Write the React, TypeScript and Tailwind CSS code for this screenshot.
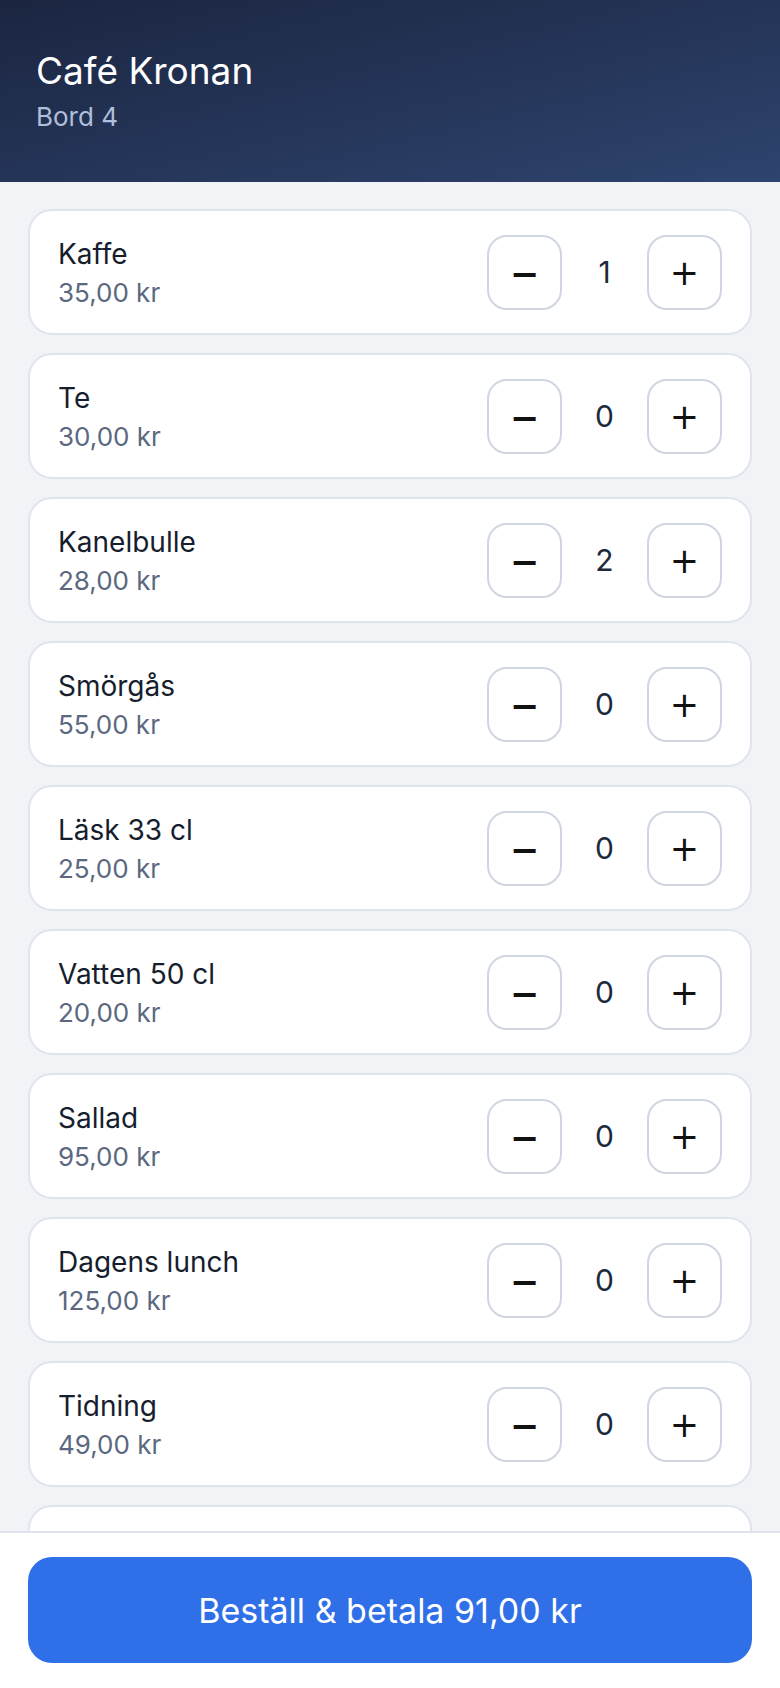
type Item = { name: string; price: number; qty: number };

const items: Item[] = [
  { name: "Kaffe", price: 35, qty: 1 },
  { name: "Te", price: 30, qty: 0 },
  { name: "Kanelbulle", price: 28, qty: 2 },
  { name: "Smörgås", price: 55, qty: 0 },
  { name: "Läsk 33 cl", price: 25, qty: 0 },
  { name: "Vatten 50 cl", price: 20, qty: 0 },
  { name: "Sallad", price: 95, qty: 0 },
  { name: "Dagens lunch", price: 125, qty: 0 },
  { name: "Tidning", price: 49, qty: 0 },
  { name: "Chokladboll", price: 22, qty: 0 },
];

const kr = (n: number) => n.toFixed(2).replace(".", ",") + " kr";

function ItemRow({ item }: { item: Item }) {
  return (
    <div className="flex h-[126px] shrink-0 items-center justify-between rounded-[24px] border-2 border-[#dfe4ee] bg-white px-7">
      <div className="flex flex-col">
        <p className="text-[28px] leading-[34px] text-[#161e2e]">{item.name}</p>
        <p className="mt-1.5 text-[26px] leading-[31px] text-[#5b6880]">{kr(item.price)}</p>
      </div>
      <div className="flex items-center gap-4">
        <button className="flex h-[75px] w-[75px] items-center justify-center rounded-[20px] border-2 border-[#cfd6e2] bg-white pt-1 font-['DejaVu_Sans',sans-serif] text-[35px] font-bold leading-none text-[#111]">
          −
        </button>
        <span className="w-[53px] text-center text-[30px] leading-none text-[#1e293b]">{item.qty}</span>
        <button className="flex h-[75px] w-[75px] items-center justify-center rounded-[20px] border-2 border-[#cfd6e2] bg-white pt-0.5 font-['DejaVu_Sans',sans-serif] text-[35px] leading-none text-[#111]">
          +
        </button>
      </div>
    </div>
  );
}

export default function App() {
  const total = items.reduce((sum, i) => sum + i.price * i.qty, 0);

  return (
    <div className="flex h-screen flex-col overflow-hidden bg-[#f1f3f7] font-['Inter',sans-serif]">
      <header className="flex h-[182px] shrink-0 flex-col justify-center bg-gradient-to-br from-[#1b2540] to-[#2e446f] px-9">
        <h1 className="text-[37px] leading-[44px] text-white">Café Kronan</h1>
        <p className="mt-2 text-[26px] leading-[32px] text-[#b0bfdb]">Bord 4</p>
      </header>

      <main className="flex min-h-0 flex-1 flex-col gap-[18px] overflow-hidden px-7 pt-[27px]">
        {items.map((item) => (
          <ItemRow key={item.name} item={item} />
        ))}
      </main>

      <footer className="relative z-10 shrink-0 border-t-2 border-[#dfe3ec] bg-white px-7 pb-[25px] pt-6">
        <button className="flex h-[106px] w-full items-center justify-center rounded-[24px] bg-[#2f6fe8] text-[34px] text-white">
          Beställ &amp; betala {kr(total)}
        </button>
      </footer>
    </div>
  );
}
